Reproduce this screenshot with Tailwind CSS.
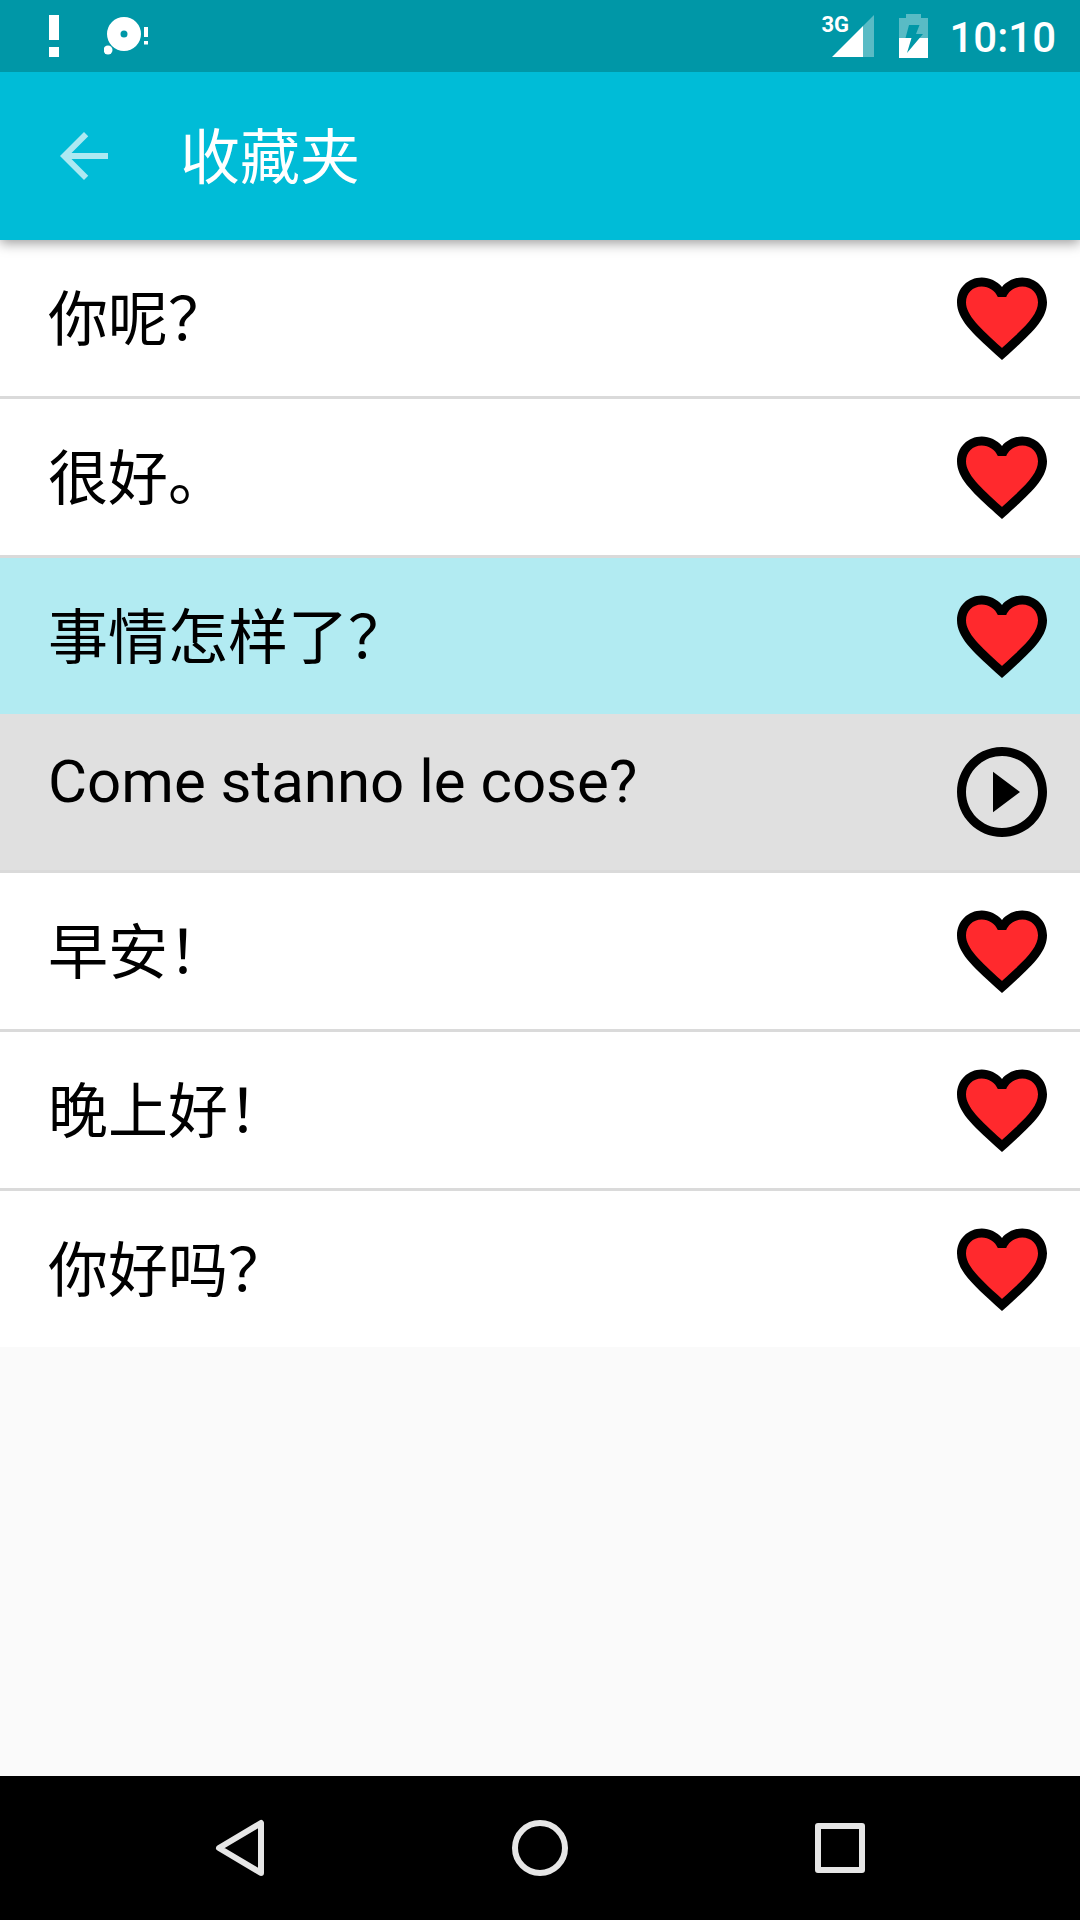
<!DOCTYPE html>
<html lang="zh-CN">
<head>
  <meta charset="UTF-8">
  <meta name="viewport" content="width=device-width, initial-scale=1.0">
  <title>收藏夹</title>
  <script src="https://cdn.jsdelivr.net/npm/@tailwindcss/browser@4"></script>
</head>
<body class="min-h-screen flex flex-col bg-[#fafafa] text-black font-['Roboto','Noto_Sans_CJK_SC',sans-serif]">
  <!-- Shared icons -->
  <svg class="hidden" xmlns="http://www.w3.org/2000/svg">
    <symbol id="heart" viewBox="0 0 24 24">
      <path fill="#ff292d" d="M12 20l-1-1C6 14.500 3 11.700 3 8.500 3 6 5 4 7.500 4c1.700 0 3.500 1 4.500 2.500C13 5 14.800 4 16.500 4 19 4 21 6 21 8.500c0 3.200-3 6-8 10.500z"/>
      <path fill="#000" d="M16.500 3c-1.740 0-3.410.810-4.500 2.090C10.910 3.810 9.240 3 7.500 3 4.420 3 2 5.420 2 8.500c0 3.780 3.400 6.860 8.550 11.540L12 21.350l1.450-1.320C18.600 15.360 22 12.280 22 8.500 22 5.420 19.580 3 16.500 3zm-4.400 15.550l-.1.1-.1-.1C7.140 14.240 4 11.390 4 8.500 4 6.500 5.500 5 7.500 5c1.540 0 3.040.990 3.570 2.360h1.870C13.460 5.990 14.960 5 16.500 5c2 0 3.500 1.500 3.500 3.500 0 2.890-3.140 5.740-7.900 10.050z"/>
    </symbol>
  </svg>

  <!-- Status bar -->
  <div class="relative z-10 h-[72px] flex items-center justify-between bg-[#0097a7] pl-12 pr-6 text-white">
    <div class="flex items-center gap-11">
      <svg class="w-3 h-[72px]" viewBox="0 0 12 72" fill="#fff">
        <path d="M1 15h10v25H1zM1 47h10v10H1z"/>
      </svg>
      <svg class="w-12 h-[72px]" viewBox="0 0 48 72" fill="#fff">
        <path fill-rule="evenodd" d="M20 17a17 17 0 1 0 0 34a17 17 0 1 0 0-34zM20 30.500a3.500 3.500 0 1 1 0 7a3.500 3.500 0 1 1 0-7z"/>
        <circle cx="4" cy="50" r="4.500"/>
        <path d="M40 27h4v10h-4zM40 41h4v3.500h-4z"/>
      </svg>
    </div>
    <div class="flex items-center gap-5">
      <div class="flex items-center gap-6">
        <div class="relative">
          <svg class="w-[54px] h-[72px]" viewBox="0 0 54 72">
            <path fill="#fff" d="M11 57L42 26V57z"/>
            <path fill="#fff" fill-opacity=".35" d="M42 26L53 15V57H42z"/>
          </svg>
          <span class="absolute left-0 top-3 text-[22px] leading-[26px] font-bold">3G</span>
        </div>
        <svg class="w-[30px] h-[72px]" viewBox="0 0 30 72">
          <path fill="#fff" fill-opacity=".35" d="M7 14h15v4h7v20h-8.400L24 34h-7l3.500-9H10L6.500 38H0V18h7z"/>
          <path fill="#fff" d="M0 38h12.500L8 53l12.600-15H29v20H0z"/>
        </svg>
      </div>
      <span class="pt-1 text-[42px] leading-none font-medium">10:10</span>
    </div>
  </div>

  <!-- App bar -->
  <header class="relative h-[168px] flex items-center gap-[60px] bg-[#00bcd7] px-12 text-white shadow-[0_3px_12px_rgba(0,0,0,0.4)]">
    <button type="button" aria-label="返回">
      <svg class="size-[72px]" viewBox="0 0 24 24" fill="#fff" fill-opacity=".68">
        <path d="M20 11H7.830l5.590-5.590L12 4l-8 8 8 8 1.410-1.410L7.830 13H20v-2z"/>
      </svg>
    </button>
    <h1 class="pt-1.5 text-[60px] leading-none">收藏夹</h1>
  </header>

  <main class="grow">
    <ul class="divide-y-[3px] divide-[#dadada] bg-white text-[60px] leading-[88px]">
      <li class="flex items-center justify-between py-6 pl-12 pr-6">
        <span class="pt-1.5">你呢？</span>
        <button type="button" aria-label="取消收藏"><svg class="size-[108px]"><use href="#heart"/></svg></button>
      </li>
      <li class="flex items-center justify-between py-6 pl-12 pr-6">
        <span class="pt-1.5">很好。</span>
        <button type="button" aria-label="取消收藏"><svg class="size-[108px]"><use href="#heart"/></svg></button>
      </li>
      <li>
        <div class="flex items-center justify-between bg-[#b2ebf2] py-6 pl-12 pr-6">
          <span class="pt-1.5">事情怎样了？</span>
          <button type="button" aria-label="取消收藏"><svg class="size-[108px]"><use href="#heart"/></svg></button>
        </div>
        <div class="flex items-start justify-between bg-[#e0e0e0] py-6 pl-12 pr-6">
          <span lang="it">Come stanno le cose?</span>
          <button type="button" aria-label="播放">
            <svg class="size-[108px]" viewBox="0 0 24 24">
              <path d="M10 16.500l6-4.500-6-4.500v9zM12 2C6.480 2 2 6.480 2 12s4.480 10 10 10 10-4.480 10-10S17.520 2 12 2zm0 18c-4.410 0-8-3.590-8-8s3.590-8 8-8 8 3.590 8 8-3.590 8-8 8z"/>
            </svg>
          </button>
        </div>
      </li>
      <li class="flex items-center justify-between py-6 pl-12 pr-6">
        <span class="pt-1.5">早安！</span>
        <button type="button" aria-label="取消收藏"><svg class="size-[108px]"><use href="#heart"/></svg></button>
      </li>
      <li class="flex items-center justify-between py-6 pl-12 pr-6">
        <span class="pt-1.5">晚上好！</span>
        <button type="button" aria-label="取消收藏"><svg class="size-[108px]"><use href="#heart"/></svg></button>
      </li>
      <li class="flex items-center justify-between py-6 pl-12 pr-6">
        <span class="pt-1.5">你好吗？</span>
        <button type="button" aria-label="取消收藏"><svg class="size-[108px]"><use href="#heart"/></svg></button>
      </li>
    </ul>
  </main>

  <!-- System navigation -->
  <nav class="flex justify-center bg-black py-9">
    <button type="button" aria-label="后退" class="w-[300px] flex justify-center">
      <svg class="size-[72px]" viewBox="0 0 72 72" fill="none" stroke="#e6e6e6" stroke-width="6" stroke-linejoin="round">
        <path d="M57 11V61L15 36z"/>
      </svg>
    </button>
    <button type="button" aria-label="主屏幕" class="w-[300px] flex justify-center">
      <svg class="size-[72px]" viewBox="0 0 72 72" fill="none" stroke="#e6e6e6" stroke-width="6">
        <circle cx="36" cy="36" r="25"/>
      </svg>
    </button>
    <button type="button" aria-label="最近任务" class="w-[300px] flex justify-center">
      <svg class="size-[72px]" viewBox="0 0 72 72" fill="none" stroke="#e6e6e6" stroke-width="6" stroke-linejoin="round">
        <path d="M14 14h44v44H14z"/>
      </svg>
    </button>
  </nav>
</body>
</html>
